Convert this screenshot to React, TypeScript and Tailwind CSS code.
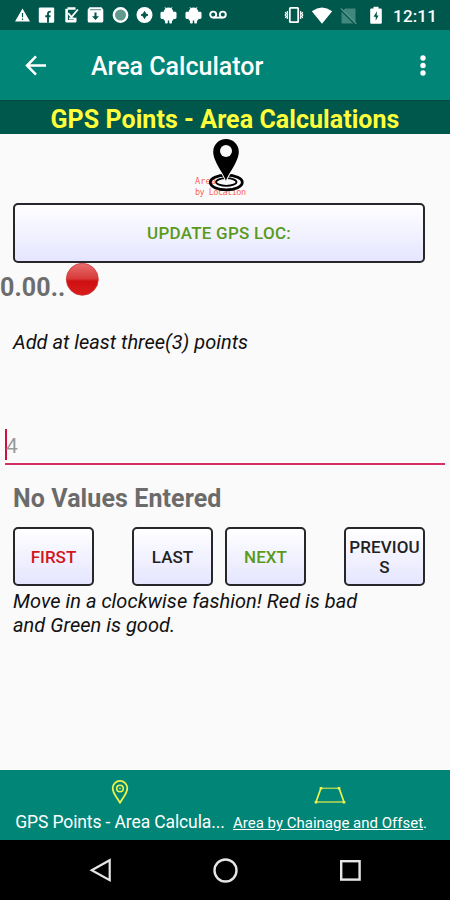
import React from 'react';

const Android = () => (
  <svg width="17" height="18" viewBox="0 0 17 18" fill="#fff">
    <path d="M5 1.2 6 3M12 1.2 11 3" stroke="#fff" strokeWidth="0.9" />
    <path d="M3.6 6.5a4.9 4.9 0 0 1 9.8 0V13.5a1 1 0 0 1-1 1H4.6a1 1 0 0 1-1-1z" />
    <rect x="0.5" y="5.8" width="4" height="7.2" rx="1.4" />
    <rect x="12.5" y="5.8" width="4" height="7.2" rx="1.4" />
    <rect x="5" y="13" width="2.8" height="4.6" rx="1" />
    <rect x="9.2" y="13" width="2.8" height="4.6" rx="1" />
  </svg>
);

const StatusBar = () => (
  <div className="h-[30px] shrink-0 bg-[#00574b] flex items-center text-white">
    <div className="flex items-center gap-[7.4px] ml-[14px]">
      <svg width="17" height="18" viewBox="0 0 17 18">
        <path d="M8.5 2.5 16 15.5H1z" fill="#fff" />
        <path d="M8.5 7v4.2M8.5 12.4v1.5" stroke="#00574b" strokeWidth="1.2" />
      </svg>
      <svg width="17" height="18" viewBox="0 0 17 18">
        <rect x="0.8" y="1.4" width="15.4" height="15.4" rx="1.2" fill="#fff" />
        <path d="M10 16.8V7.8q0-2.3 2.8-2.2M7.3 10.3h5.2" stroke="#00574b" strokeWidth="1.9" fill="none" />
      </svg>
      <svg width="17" height="18" viewBox="0 0 17 18" fill="none">
        <path d="M4.5 2.5h8M3.6 2.7v12.6h8.6v-3.5" stroke="#fff" strokeWidth="2.6" strokeLinejoin="round" />
        <path d="M5.2 7.2 8.4 11l6.5-7.5M6 12.5h5" stroke="#fff" strokeWidth="1.8" />
      </svg>
      <svg width="17" height="18" viewBox="0 0 17 18">
        <path d="M2.5 1.2h12l1.8 2.6V15a1.6 1.6 0 0 1-1.6 1.6H2.3A1.6 1.6 0 0 1 .7 15V3.8z" fill="#fff" />
        <path d="M2.8 3.7h11.4" stroke="#00574b" strokeWidth="0.7" />
        <path d="M7.5 6.5h2v3.7H12L8.5 14 5 10.2h2.5z" fill="#00574b" />
      </svg>
      <svg width="17" height="18" viewBox="0 0 17 18">
        <circle cx="8.5" cy="9" r="6.7" fill="#62998f" stroke="#fff" strokeWidth="2.4" />
      </svg>
      <svg width="17" height="18" viewBox="0 0 17 18">
        <circle cx="8.5" cy="9" r="8" fill="#fff" />
        <path d="M8.5 5.5 9.7 7.8 12 9 9.7 10.2 8.5 12.5 7.3 10.2 5 9 7.3 7.8z" fill="#00574b" stroke="#00574b" />
      </svg>
      <Android />
      <Android />
      <svg width="18" height="18" viewBox="0 0 18 18" fill="none" stroke="#fff" strokeWidth="1.9">
        <circle cx="4.2" cy="8.6" r="3" />
        <circle cx="13.8" cy="8.6" r="3" />
        <path d="M4.2 11.6h9.6" />
      </svg>
    </div>
    <div className="flex items-center ml-auto mr-[13px]">
      <svg width="20" height="18" viewBox="0 0 20 18" fill="none" stroke="#fff" className="mr-[7px]">
        <rect x="5.8" y="1.8" width="8.4" height="14.4" rx="0.8" strokeWidth="1.8" />
        <path d="M3.3 5v8M16.7 5v8M1.2 6l1 1.5-1 1.5 1 1.5-1 1.5M18.8 6l-1 1.5 1 1.5-1 1.5 1 1.5" strokeWidth="1.2" />
      </svg>
      <svg width="22" height="18" viewBox="0 0 22 18" fill="#fff" className="mr-[7px]">
        <path d="M11 17.8.8 5.2Q11-2 21.2 5.2z" />
      </svg>
      <svg width="18" height="18" viewBox="0 0 18 18" className="mr-[11px]">
        <path d="M1.5 6 5.2 2.4H15.5v15H1.5z" fill="#42877d" />
        <path d="M.5 3.5 15.5 18.5" stroke="#00574b" strokeWidth="1.6" />
        <path d="M.8 2.3 16.3 17.8" stroke="#5b978e" strokeWidth="1.2" />
      </svg>
      <svg width="14" height="18" viewBox="0 0 14 18" className="mr-[10px]">
        <path d="M4.5 .8h5v1.8h2.3a1 1 0 0 1 1 1v13.2a1 1 0 0 1-1 1H2.2a1 1 0 0 1-1-1V3.6a1 1 0 0 1 1-1h2.3z" fill="#fff" />
        <path d="M8 5.2 4.5 10.8h2.2v4L9.6 9.4H7.7z" fill="#00574b" />
      </svg>
      <span className="text-[17px] leading-[20px] font-medium tracking-[0.15px] mt-px">12:11</span>
    </div>
  </div>
);

const MapPin = () => (
  <svg width="70" height="68" viewBox="190 135 70 68">
    <g fill="#ff3328" fillOpacity="0.8" fontSize="8.5" fontFamily="DejaVu Sans Mono, monospace">
      <text x="195" y="183.5" textLength="21">Area</text>
      <text x="195" y="195" textLength="51">by Location</text>
    </g>
    <ellipse cx="226.3" cy="182.5" rx="16" ry="7.3" fill="none" stroke="#000" strokeWidth="2.8" />
    <ellipse cx="226.3" cy="182" rx="10.2" ry="3.8" fill="#fafafa" stroke="#000" strokeWidth="1.8" />
    <path
      d="M226 181c-1.2-6-12.8-19-12.8-29.2a12.8 12.8 0 0 1 25.6 0c0 10.2-11.6 23.2-12.8 29.2z"
      fill="#000"
      stroke="#fafafa"
      strokeWidth="2"
      paintOrder="stroke"
    />
    <circle cx="226" cy="151" r="6" fill="#fafafa" />
  </svg>
);

type PadButtonProps = {
  label: React.ReactNode;
  className: string;
};

const PadButton = ({ label, className }: PadButtonProps) => (
  <button
    className={`rounded-[5px] border-2 border-[#26262b] bg-gradient-to-b from-white to-[#e5e5ff] text-[17px] leading-[20px] font-medium whitespace-nowrap ${className}`}
  >
    {label}
  </button>
);

const BottomTabs = () => (
  <div className="h-[70px] shrink-0 bg-[#008577] flex text-white whitespace-nowrap">
    <div className="w-[210px] ml-[15px] flex flex-col items-center">
      <svg width="18" height="26" viewBox="0 0 18 26" fill="none" stroke="#eef34b" className="mt-[9px]">
        <path d="M9 24.2C8.2 20.5 1.7 15.3 1.7 9.2a7.3 7.3 0 0 1 14.6 0c0 6.1-6.5 11.3-7.3 15z" strokeWidth="1.8" />
        <circle cx="9" cy="9.5" r="3.3" strokeWidth="1.6" />
        <circle cx="9" cy="9.5" r="0.6" strokeWidth="0.8" />
      </svg>
      <span className="text-[17.5px] leading-[20px] mt-[7px] tracking-[-0.12px]">GPS Points - Area Calcula...</span>
    </div>
    <div className="w-[194px] ml-[8px] flex flex-col items-center">
      <svg width="32" height="20" viewBox="0 0 32 20" fill="none" stroke="#eef34b" className="mt-[15px]">
        <path d="M7 3.2h18" strokeWidth="1" />
        <path d="M2 17h28" strokeWidth="1.8" strokeOpacity="0.65" />
        <path d="M7 3 2 17M25 3l5 14" strokeWidth="1.7" />
        <path d="M7 2v2.5M25 2v2.5M2 16v2.5M30 16v2.5" strokeWidth="2.6" />
      </svg>
      <span className="text-[15px] leading-[20px] mt-[8px]">
        <span className="underline">Area by Chainage and Offset</span>.
      </span>
    </div>
  </div>
);

const SystemNav = () => (
  <div className="h-[60px] shrink-0 bg-black flex items-center pl-[88px]">
    <svg width="26" height="26" viewBox="0 0 26 26" fill="none" stroke="#e6e6e6" strokeWidth="2.2">
      <path d="M21.7 3.2v20L3.7 13.2z" />
    </svg>
    <svg width="26" height="26" viewBox="0 0 26 26" fill="none" stroke="#e6e6e6" strokeWidth="2.4" className="ml-[99px]">
      <circle cx="12.5" cy="13.5" r="11" />
    </svg>
    <svg width="26" height="26" viewBox="0 0 26 26" fill="none" stroke="#e6e6e6" strokeWidth="2.4" className="ml-[99px]">
      <rect x="3.2" y="4.2" width="18.4" height="18.4" />
    </svg>
  </div>
);

export default function App() {
  return (
    <div className="w-[450px] h-[900px] overflow-hidden flex flex-col bg-[#fafafa] font-['Roboto',sans-serif]">
      <StatusBar />

      <header className="h-[70px] shrink-0 bg-[#008577] flex items-center text-white">
        <svg width="24" height="24" viewBox="0 0 24 24" fill="none" stroke="#fff" strokeWidth="2.5" className="ml-[24px]">
          <path d="M22 12.5H4M12 3.4 3 12.5l9 9.1" />
        </svg>
        <h1 className="text-[25px] leading-[30px] font-medium ml-[43px] mt-[4px]">Area Calculator</h1>
        <svg width="8" height="24" viewBox="0 0 8 24" fill="#fff" className="ml-auto mr-[23px]">
          <circle cx="4" cy="5" r="2.7" />
          <circle cx="4" cy="12.5" r="2.7" />
          <circle cx="4" cy="20" r="2.7" />
        </svg>
      </header>

      <div className="h-[34px] shrink-0 bg-[#00574b] border-t border-[#004a40] flex items-center justify-center">
        <h2 className="text-[25px] leading-[30px] font-bold text-[#ffff3c] mt-[4px] tracking-[0.06px] whitespace-nowrap">
          GPS Points - Area Calculations
        </h2>
      </div>

      <main className="flex-1 flex flex-col">
        <div className="h-[69px] flex justify-center pt-px">
          <MapPin />
        </div>
        <PadButton label="UPDATE GPS LOC:" className="ml-[13px] w-[412px] h-[60px] tracking-[0.25px] text-[#5a9a1a]" />
        <div className="flex h-[60px]">
          <span className="w-[65px] text-[25px] leading-[30px] font-bold text-[#6d6d6d] mt-[10px] tracking-[0.1px]">0.00..</span>
          <svg width="34" height="34" viewBox="0 0 34 34" className="-mt-px">
            <defs>
              <linearGradient id="ball" x1="0" y1="0" x2="0" y2="1">
                <stop offset="0" stopColor="#e87070" />
                <stop offset="0.48" stopColor="#d83a3a" />
                <stop offset="0.56" stopColor="#cf1010" />
                <stop offset="1" stopColor="#d81c1c" />
              </linearGradient>
            </defs>
            <circle cx="17.3" cy="17.3" r="16" fill="url(#ball)" stroke="#c93a3a" strokeWidth="0.8" />
          </svg>
        </div>
        <p className="ml-[13px] mt-[7px] text-[20px] leading-[24px] italic text-[#111]">Add at least three(3) points</p>

        <div className="mx-[5px] mt-[75px] h-[36px] flex items-center border-b-2 border-[#d32f60]">
          <span className="w-[2px] h-[31px] bg-[#d0103c] mb-[3px]" />
          <span className="text-[21px] leading-[24px] text-[#999] -ml-px">4</span>
        </div>

        <h3 className="ml-[13px] mt-[19px] text-[25px] leading-[30px] font-bold text-[#6b6b6b] tracking-[0.1px]">No Values Entered</h3>
        <div className="flex mt-[13px] ml-[13px]">
          <PadButton label="FIRST" className="w-[81px] h-[59px] text-[#d2161e]" />
          <PadButton label="LAST" className="w-[81px] h-[59px] ml-[38px] text-[#222]" />
          <PadButton label="NEXT" className="w-[81px] h-[59px] ml-[12px] text-[#5a9a1a]" />
          <PadButton label={<>PREVIOU<br />S</>} className="w-[81px] h-[59px] ml-[38px] px-0 tracking-[0.1px] text-[#222]" />
        </div>
        <p className="ml-[13px] mt-[3px] w-[370px] text-[20px] leading-[24px] italic text-[#111] tracking-[0.03px]">
          Move in a clockwise fashion! Red is bad
          <br />
          and Green is good.
        </p>
      </main>

      <BottomTabs />
      <SystemNav />
    </div>
  );
}
